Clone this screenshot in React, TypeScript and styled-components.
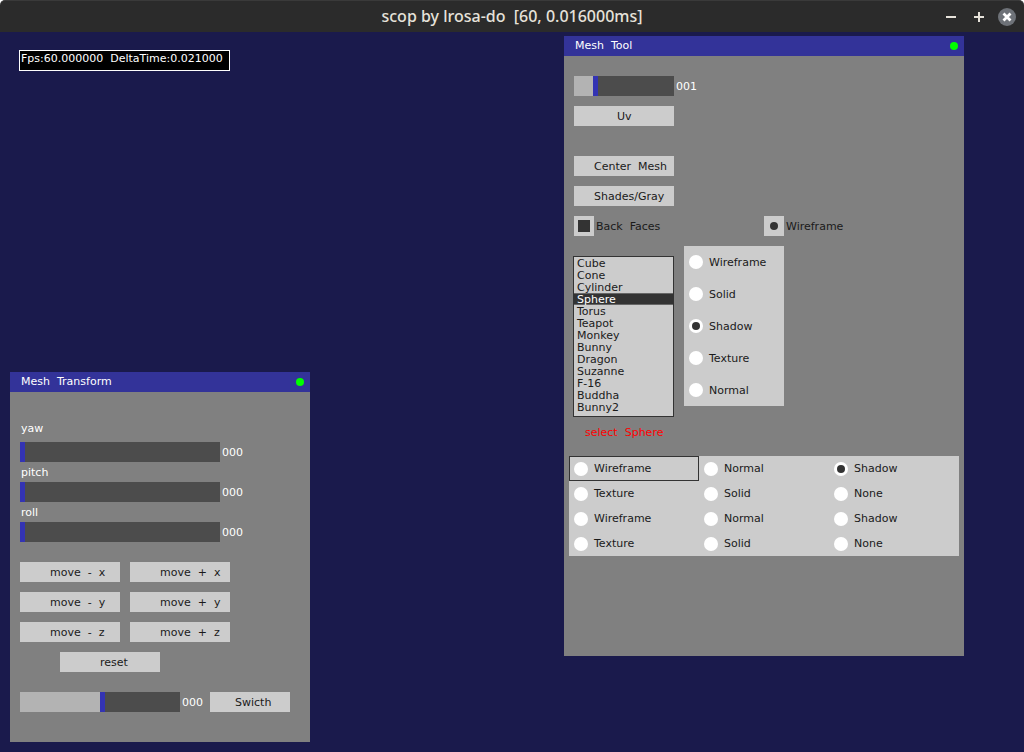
import React, { useState } from "react";
import styled, { createGlobalStyle, css } from "styled-components";

const colors = {
  desktop: "#1a1a4c",
  titleBar: "#2b2b2b",
  titleText: "#e6e2da",
  panel: "#808080",
  panelHeader: "#333399",
  control: "#cccccc",
  track: "#4c4c4c",
  fill: "#b3b3b3",
  thumb: "#3333b3",
  ink: "#1a1a1a",
  dark: "#333333",
  edge: "#666666",
  led: "#00ff00",
  alert: "#ff0000",
};

const GlobalStyle = createGlobalStyle`
  * { box-sizing: border-box; }
  body {
    margin: 0;
    background: #ffffff;
    font-family: "DejaVu Sans", sans-serif;
    font-size: 11px;
    line-height: 13px;
    color: #ffffff;
  }
  button, input, select { font: inherit; margin: 0; }
`;

const Frame = styled.div`
  display: flex;
  flex-direction: column;
  min-height: 100vh;
`;

const TitleBar = styled.header`
  display: grid;
  grid-template-columns: 1fr auto 1fr;
  align-items: center;
  height: 32px;
  padding: 0 8px;
  background: ${colors.titleBar};
  border-top: 1px solid #3a3a3a;
  border-radius: 5px 5px 0 0;
`;

const WindowTitle = styled.h1`
  grid-column: 2;
  margin: 0;
  padding-bottom: 2px;
  font: 500 16px/24px "Noto Sans", sans-serif;
  color: ${colors.titleText};
  white-space: pre;
`;

const WindowButtons = styled.div`
  display: flex;
  justify-content: flex-end;
  gap: 10px;
`;

const WindowButton = styled.button`
  display: flex;
  width: 18px;
  height: 18px;
  padding: 0;
  border: 0;
  background: none;
`;

const Desktop = styled.main`
  position: relative;
  flex: 1;
  background: ${colors.desktop};
`;

const Stats = styled.output`
  position: absolute;
  left: 19px;
  top: 18px;
  height: 21px;
  padding: 1px 6px 0 1px;
  border: 1px solid #ffffff;
  background: #000000;
  white-space: pre;
`;

const Panel = styled.section<{ $x: number; $y: number; $width: number }>`
  position: absolute;
  left: ${(p) => p.$x}px;
  top: ${(p) => p.$y}px;
  width: ${(p) => p.$width}px;
  background: ${colors.panel};
`;

const PanelHeader = styled.header`
  display: flex;
  align-items: center;
  justify-content: space-between;
  height: 20px;
  padding: 0 6px 0 11px;
  background: ${colors.panelHeader};
`;

const PanelTitle = styled.h2`
  margin: 0;
  padding-bottom: 2px;
  font: inherit;
  white-space: pre;
`;

const Led = styled.span`
  width: 8px;
  height: 8px;
  border-radius: 50%;
  background: ${colors.led};
`;

const TransformBody = styled.div`
  display: flex;
  flex-direction: column;
  padding: 30px 10px;
`;

const ToolBody = styled.div`
  display: flex;
  flex-direction: column;
  padding: 20px 5px 100px;
`;

const Inset = styled.div<{ $spaceAbove?: number }>`
  display: flex;
  flex-direction: column;
  align-items: flex-start;
  gap: 10px;
  margin-top: ${(p) => p.$spaceAbove ?? 0}px;
  padding: 0 5px;
`;

const SliderLabel = styled.label<{ $raised?: boolean }>`
  height: 20px;
  padding-left: 1px;
  line-height: ${(p) => (p.$raised ? 13 : 21)}px;
`;

const SliderRow = styled.div`
  display: flex;
  align-items: center;
  gap: 2px;
`;

const Range = styled.input.attrs({ type: "range" })<{ $width: number; $ratio: number }>`
  appearance: none;
  display: block;
  width: ${(p) => p.$width}px;
  height: 20px;
  background: linear-gradient(${colors.fill}, ${colors.fill}) no-repeat ${colors.track};
  background-size: calc((100% - 5px) * ${(p) => p.$ratio}) 100%;
  &::-webkit-slider-thumb {
    appearance: none;
    width: 5px;
    height: 20px;
    border-radius: 0;
    background: ${colors.thumb};
  }
`;

const Reading = styled.output`
  width: 26px;
`;

const Button = styled.button<{ $width?: number; $indent?: number }>`
  width: ${(p) => p.$width ?? 100}px;
  height: 20px;
  padding: 0 0 0 ${(p) => p.$indent ?? 0}px;
  border: 0;
  background: ${colors.control};
  color: ${colors.ink};
  white-space: pre;
  text-align: ${(p) => (p.$indent ? "left" : "center")};
`;

const MoveGrid = styled.div`
  display: grid;
  grid-template-columns: 100px 100px;
  gap: 10px;
  margin: 20px 0 10px;
`;

const ResetRow = styled.div`
  display: flex;
  padding-left: 40px;
  margin-bottom: 20px;
`;

const CheckRow = styled.div`
  display: flex;
  gap: 90px;
`;

const CheckLabel = styled.label`
  display: flex;
  align-items: center;
  gap: 2px;
  width: 100px;
  color: ${colors.ink};
  white-space: pre;
`;

const Check = styled.input.attrs({ type: "checkbox" })<{ $round?: boolean }>`
  appearance: none;
  display: grid;
  place-items: center;
  width: 20px;
  height: 20px;
  background: ${colors.control};
  &:checked::before {
    content: "";
    background: ${colors.dark};
    ${(p) =>
      p.$round
        ? css`
            width: 8px;
            height: 8px;
            border-radius: 50%;
          `
        : css`
            width: 12px;
            height: 12px;
          `}
  }
`;

const Choices = styled.div`
  display: flex;
  align-items: flex-start;
  gap: 10px;
  padding: 10px 4px 0;
`;

const MeshList = styled.select`
  appearance: none;
  width: 101px;
  height: 161px;
  margin-top: 10px;
  padding: 0;
  border: 1px solid ${colors.dark};
  border-radius: 0;
  outline: 0;
  overflow: hidden;
  background: ${colors.control};
  color: ${colors.ink};
  option {
    height: 12px;
    min-height: 12px;
    padding: 0 3px;
    line-height: 10px;
    color: ${colors.ink};
  }
  option:checked {
    background: linear-gradient(
      ${colors.edge} 1px,
      ${colors.dark} 1px,
      ${colors.dark} 11px,
      ${colors.edge} 11px
    );
    color: #ffffff;
    -webkit-text-fill-color: #ffffff;
  }
`;

const ModeList = styled.fieldset`
  display: flex;
  flex-direction: column;
  width: 100px;
  margin: 0;
  padding: 0;
  border: 0;
  background: ${colors.control};
`;

const ModeGrid = styled.fieldset`
  display: grid;
  grid-template-columns: repeat(3, 1fr);
  min-width: 0;
  margin: 17px 0 0;
  padding: 0;
  border: 0;
  background: ${colors.control};
`;

const RadioLabel = styled.label<{ $height: number; $framed?: boolean }>`
  display: flex;
  align-items: center;
  gap: 6px;
  height: ${(p) => p.$height}px;
  padding-left: 5px;
  color: ${colors.ink};
  outline: ${(p) => (p.$framed ? `1px solid ${colors.dark}` : "0")};
  outline-offset: -1px;
`;

const Radio = styled.input.attrs({ type: "radio" })`
  appearance: none;
  display: grid;
  place-items: center;
  width: 14px;
  height: 14px;
  border-radius: 50%;
  background: #ffffff;
  &:checked::before {
    content: "";
    width: 8px;
    height: 8px;
    border-radius: 50%;
    background: ${colors.dark};
  }
`;

const Selection = styled.p`
  margin: 9px 0 0;
  padding-left: 16px;
  color: ${colors.alert};
  white-space: pre;
`;

const MESHES = [
  "Cube", "Cone", "Cylinder", "Sphere", "Torus", "Teapot", "Monkey",
  "Bunny", "Dragon", "Suzanne", "F-16", "Buddha", "Bunny2",
];
const MODES = ["Wireframe", "Solid", "Shadow", "Texture", "Normal"];
const PASSES = [
  "Wireframe", "Normal", "Shadow",
  "Texture", "Solid", "None",
  "Wireframe", "Normal", "Shadow",
  "Texture", "Solid", "None",
];
const MOVES = ["move  -  x", "move  +  x", "move  -  y", "move  +  y", "move  -  z", "move  +  z"];

interface SliderProps {
  id: string;
  name?: string;
  width: number;
  initial: number;
  max: number;
  scale?: number;
}

function Slider({ id, name, width, initial, max, scale = 1 }: SliderProps) {
  const [value, setValue] = useState(initial);
  const reading = String(Math.floor(value * scale)).padStart(3, "0");
  return (
    <SliderRow>
      <Range
        id={id}
        aria-label={name}
        $width={width}
        $ratio={value / max}
        min={0}
        max={max}
        value={value}
        onChange={(e) => setValue(Number(e.target.value))}
      />
      <Reading htmlFor={id}>{reading}</Reading>
    </SliderRow>
  );
}

function TransformPanel() {
  return (
    <Panel $x={10} $y={340} $width={300}>
      <PanelHeader>
        <PanelTitle>Mesh  Transform</PanelTitle>
        <Led />
      </PanelHeader>
      <TransformBody>
        {["yaw", "pitch", "roll"].map((axis, i) => (
          <React.Fragment key={axis}>
            <SliderLabel htmlFor={axis} $raised={i === 0}>{axis}</SliderLabel>
            <Slider id={axis} width={200} initial={0} max={360} />
          </React.Fragment>
        ))}
        <MoveGrid>
          {MOVES.map((move) => (
            <Button key={move} $indent={30}>{move}</Button>
          ))}
        </MoveGrid>
        <ResetRow>
          <Button $indent={40}>reset</Button>
        </ResetRow>
        <SliderRow>
          <Slider id="blend" name="Blend" width={160} initial={16} max={31} scale={0.03} />
          <Button $width={80} $indent={25}>Swicth</Button>
        </SliderRow>
      </TransformBody>
    </Panel>
  );
}

function ToolPanel() {
  const [mesh, setMesh] = useState("Sphere");
  const [mode, setMode] = useState("Shadow");
  const [pass, setPass] = useState(2);
  return (
    <Panel $x={564} $y={4} $width={400}>
      <PanelHeader>
        <PanelTitle>Mesh  Tool</PanelTitle>
        <Led />
      </PanelHeader>
      <ToolBody>
        <Inset>
          <Slider id="channel" name="Texture channel" width={100} initial={20} max={100} scale={0.05} />
          <Button $indent={43}>Uv</Button>
        </Inset>
        <Inset $spaceAbove={30}>
          <Button $indent={20}>Center  Mesh</Button>
          <Button $indent={20}>Shades/Gray</Button>
          <CheckRow>
            <CheckLabel><Check defaultChecked />Back  Faces</CheckLabel>
            <CheckLabel><Check $round defaultChecked />Wireframe</CheckLabel>
          </CheckRow>
        </Inset>
        <Choices>
          <MeshList aria-label="Mesh" size={13} value={mesh} onChange={(e) => setMesh(e.target.value)}>
            {MESHES.map((m) => <option key={m}>{m}</option>)}
          </MeshList>
          <ModeList aria-label="Display mode">
            {MODES.map((m) => (
              <RadioLabel key={m} $height={32}>
                <Radio name="mode" checked={mode === m} onChange={() => setMode(m)} />
                {m}
              </RadioLabel>
            ))}
          </ModeList>
        </Choices>
        <Selection>select  {mesh}</Selection>
        <ModeGrid aria-label="Render pass">
          {PASSES.map((p, i) => (
            <RadioLabel key={i} $height={25} $framed={i === 0}>
              <Radio name="pass" checked={pass === i} onChange={() => setPass(i)} />
              {p}
            </RadioLabel>
          ))}
        </ModeGrid>
      </ToolBody>
    </Panel>
  );
}

export default function App() {
  return (
    <Frame>
      <GlobalStyle />
      <TitleBar>
        <WindowTitle>scop by lrosa-do  [60, 0.016000ms]</WindowTitle>
        <WindowButtons>
          <WindowButton aria-label="Minimize">
            <svg width="18" height="18"><path d="M4 9h10" stroke={colors.titleText} strokeWidth="2" /></svg>
          </WindowButton>
          <WindowButton aria-label="Maximize">
            <svg width="18" height="18"><path d="M4 9h10M9 4v10" stroke={colors.titleText} strokeWidth="2" /></svg>
          </WindowButton>
          <WindowButton aria-label="Close">
            <svg width="18" height="18">
              <circle cx="9" cy="9" r="9" fill="#6e7278" />
              <path d="M5.500 5.500l7 7M12.500 5.500l-7 7" stroke="#ffffff" strokeWidth="2.800" />
            </svg>
          </WindowButton>
        </WindowButtons>
      </TitleBar>
      <Desktop>
        <Stats>Fps:60.000000  DeltaTime:0.021000</Stats>
        <TransformPanel />
        <ToolPanel />
      </Desktop>
    </Frame>
  );
}
